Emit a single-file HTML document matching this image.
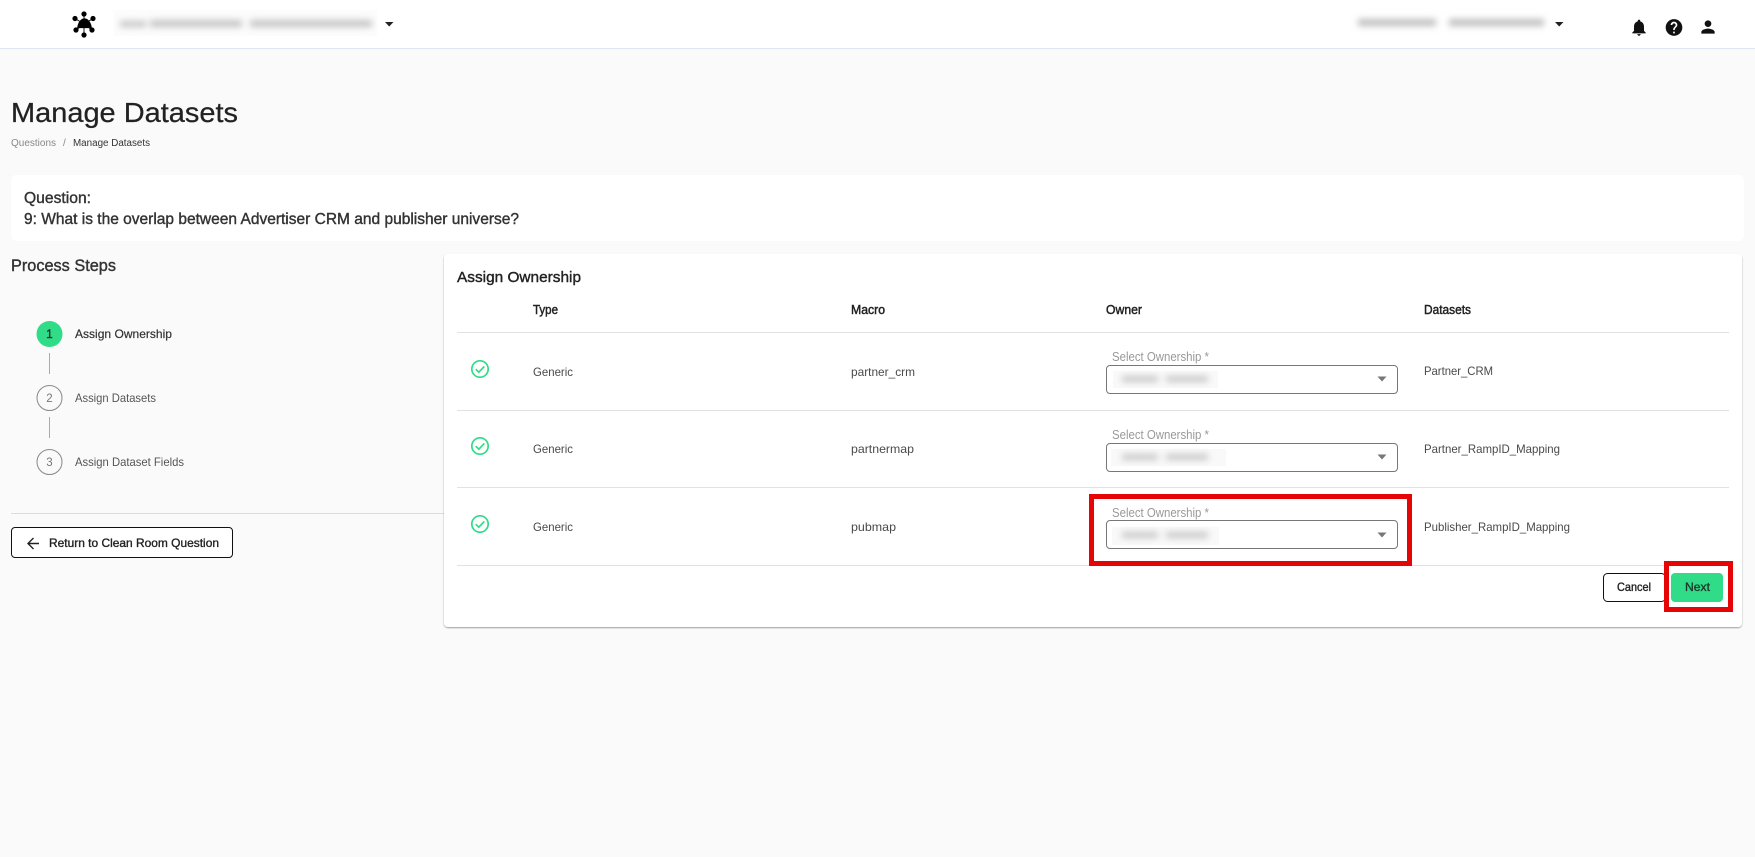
<!DOCTYPE html>
<html lang="en"><head><meta charset="utf-8"><title>Manage Datasets</title>
<style>
html,body{margin:0;padding:0;background:#fafafa;width:1755px;height:857px;overflow:hidden}
svg{display:block}
text{font-family:"Liberation Sans",sans-serif;fill:#333;font-size:12px}
.s{stroke:#333;stroke-width:.4px}
.h{fill:#222;stroke:#222;stroke-width:.45px;font-size:12.5px}
.l{fill:#999;font-size:12.5px}
</style></head><body>
<svg width="1755" height="857" viewBox="0 0 1755 857" xmlns="http://www.w3.org/2000/svg">
<defs>
<filter id="b" x="-20%" y="-150%" width="140%" height="400%"><feGaussianBlur stdDeviation="3.4"/></filter>
<filter id="sh" x="-2%" y="-2%" width="104%" height="104%"><feDropShadow dx="0" dy="1" stdDeviation="0.8" flood-color="#000" flood-opacity=".38"/></filter>
<g id="chk" fill="none" stroke="#30dc87"><circle r="8.2" stroke-width="1.7"/><path d="M-4.3 .2L-1.2 3.2L4.3-2.6" stroke-width="1.7"/></g>
<path id="car" d="M-4.5-2.5H4.5L0 2.5Z" fill="#777"/>
</defs>
<rect width="1755" height="857" fill="#fafafa"/>
<!-- header -->
<rect width="1755" height="48" fill="#fff"/>
<rect y="48" width="1755" height="1" fill="#e0e4f0"/>
<g fill="#000" stroke="#000">
<path d="M84 13.5V24M75 18.5L84 24M93 18.5L84 24M76 30L84 24M92 30L84 24M84 35V24" stroke-width=".9"/>
<g stroke-width=".8"><circle cx="84" cy="14" r="2.2"/><circle cx="75" cy="18.5" r="2.2"/><circle cx="93" cy="18.5" r="2.2"/><circle cx="76" cy="30" r="2.2"/><circle cx="92" cy="30" r="2.2"/><circle cx="84" cy="35" r="2.2"/></g>
<path d="M77.5 27.8C78 22.5 81 18.7 84.5 18.7C88 18.7 91 22.5 91.5 27.8Z" stroke-width=".6"/>
</g>
<rect x="114" y="10" width="263" height="26" fill="#fcfcfc"/>
<g fill="#c4c4c4" filter="url(#b)"><rect x="120" y="21" width="26" height="6"/><rect x="150" y="20" width="92" height="7"/><rect x="250" y="20" width="122" height="7"/></g>
<path d="M385 22H393.5L389.2 26.5Z" fill="#222"/>
<g fill="#bdbdbd" filter="url(#b)"><rect x="1358" y="19" width="78" height="7"/><rect x="1449" y="19" width="95" height="7"/></g>
<path d="M1555 22H1563.5L1559.2 26.5Z" fill="#222"/>
<g fill="#111">
<path transform="translate(1629 17.5) scale(.8333)" d="M12 22c1.1 0 2-.9 2-2h-4c0 1.1.9 2 2 2zm6-6v-5c0-3.07-1.63-5.64-4.5-6.32V4c0-.83-.67-1.5-1.5-1.5s-1.5.67-1.5 1.5v.68C7.64 5.36 6 7.92 6 11v5l-2 2v1h16v-1l-2-2z"/>
<path transform="translate(1664 17.5) scale(.8333)" d="M12 2C6.48 2 2 6.48 2 12s4.48 10 10 10 10-4.48 10-10S17.52 2 12 2zm1 17h-2v-2h2v2zm2.07-7.75l-.9.92C13.45 12.9 13 13.5 13 15h-2v-.5c0-1.1.45-2.1 1.17-2.83l1.24-1.26c.37-.36.59-.86.59-1.41 0-1.1-.9-2-2-2s-2 .9-2 2H8c0-2.21 1.79-4 4-4s4 1.79 4 4c0 .88-.36 1.68-.93 2.25z"/>
<path transform="translate(1698 17) scale(.8333)" d="M12 12c2.21 0 4-1.79 4-4s-1.79-4-4-4-4 1.79-4 4 1.79 4 4 4zm0 2c-2.67 0-8 1.34-8 4v2h16v-2c0-2.66-5.33-4-8-4z"/>
</g>
<!-- title -->
<text x="11" y="122" textLength="227" lengthAdjust="spacingAndGlyphs" style="font-size:28px;fill:#222;stroke:#222;stroke-width:.25px">Manage Datasets</text>
<text x="11" y="146" textLength="45" lengthAdjust="spacingAndGlyphs" style="font-size:10px;fill:#888">Questions</text>
<text x="63" y="146" style="font-size:10px;fill:#888">/</text>
<text x="73" y="146" textLength="77" lengthAdjust="spacingAndGlyphs" style="font-size:10px;fill:#333">Manage Datasets</text>
<!-- question -->
<rect x="11" y="175" width="1733" height="66" rx="5" fill="#fff"/>
<text x="24" y="203" class="s" textLength="67" lengthAdjust="spacingAndGlyphs" style="font-size:16px">Question:</text>
<text x="24" y="224" class="s" textLength="495" lengthAdjust="spacingAndGlyphs" style="font-size:16px">9: What is the overlap between Advertiser CRM and publisher universe?</text>
<!-- steps -->
<text x="11" y="271" class="s" textLength="105" lengthAdjust="spacingAndGlyphs" style="font-size:17px">Process Steps</text>
<circle cx="49.5" cy="334" r="13" fill="#30dc87"/>
<text x="49.5" y="338" text-anchor="middle" class="s" style="font-size:11.5px;fill:#1d3b2d;stroke:#1d3b2d">1</text>
<text x="75" y="338" class="s" textLength="97" lengthAdjust="spacingAndGlyphs" style="font-size:12px;stroke-width:.2px">Assign Ownership</text>
<rect x="49" y="353" width="1" height="21" fill="#aaa"/>
<circle cx="49.5" cy="398" r="12.5" fill="none" stroke="#888" stroke-width="1"/>
<text x="49.5" y="402" text-anchor="middle" style="font-size:11.5px;fill:#777">2</text>
<text x="75" y="402" textLength="81" lengthAdjust="spacingAndGlyphs" style="font-size:12px;fill:#555">Assign Datasets</text>
<rect x="49" y="417" width="1" height="21" fill="#aaa"/>
<circle cx="49.5" cy="462" r="12.5" fill="none" stroke="#888" stroke-width="1"/>
<text x="49.5" y="466" text-anchor="middle" style="font-size:11.5px;fill:#777">3</text>
<text x="75" y="466" textLength="109" lengthAdjust="spacingAndGlyphs" style="font-size:12px;fill:#555">Assign Dataset Fields</text>
<rect x="11" y="513" width="433" height="1" fill="#ddd"/>
<rect x="11.5" y="527.5" width="221" height="30" rx="3.5" fill="#fff" stroke="#111"/>
<path d="M39 543.5H28.5M33.5 538L28 543.5L33.5 549" fill="none" stroke="#222" stroke-width="1.4"/>
<text x="49" y="547" class="s" textLength="170" lengthAdjust="spacingAndGlyphs" style="font-size:12px;fill:#222;stroke:#222;stroke-width:.35px">Return to Clean Room Question</text>
<!-- card -->
<rect x="444" y="254" width="1298" height="373" rx="4" fill="#fff" filter="url(#sh)"/>
<text x="457" y="282" class="s" textLength="124" lengthAdjust="spacingAndGlyphs" style="font-size:15px;fill:#222;stroke:#222">Assign Ownership</text>
<text x="533" y="314" class="h" textLength="25" lengthAdjust="spacingAndGlyphs">Type</text>
<text x="851" y="314" class="h" textLength="34" lengthAdjust="spacingAndGlyphs">Macro</text>
<text x="1106" y="314" class="h" textLength="36" lengthAdjust="spacingAndGlyphs">Owner</text>
<text x="1424" y="314" class="h" textLength="47" lengthAdjust="spacingAndGlyphs">Datasets</text>
<g fill="#e2e2e2"><rect x="457" y="332" width="1272" height="1"/><rect x="457" y="410" width="1272" height="1"/><rect x="457" y="487" width="1272" height="1"/><rect x="457" y="565" width="1272" height="1"/></g>
<use href="#chk" x="480" y="369"/><use href="#chk" x="480" y="446"/><use href="#chk" x="480" y="524"/>
<g>
<text x="533" y="376" textLength="40" lengthAdjust="spacingAndGlyphs" style="fill:#4a4a4a">Generic</text>
<text x="851" y="376" textLength="64" lengthAdjust="spacingAndGlyphs" style="fill:#4a4a4a">partner_crm</text>
<text x="1424" y="375" textLength="69" lengthAdjust="spacingAndGlyphs" style="fill:#4a4a4a">Partner_CRM</text>
<text x="533" y="453" textLength="40" lengthAdjust="spacingAndGlyphs" style="fill:#4a4a4a">Generic</text>
<text x="851" y="453" textLength="63" lengthAdjust="spacingAndGlyphs" style="fill:#4a4a4a">partnermap</text>
<text x="1424" y="453" textLength="136" lengthAdjust="spacingAndGlyphs" style="fill:#4a4a4a">Partner_RampID_Mapping</text>
<text x="533" y="531" textLength="40" lengthAdjust="spacingAndGlyphs" style="fill:#4a4a4a">Generic</text>
<text x="851" y="531" textLength="45" lengthAdjust="spacingAndGlyphs" style="fill:#4a4a4a">pubmap</text>
<text x="1424" y="531" textLength="146" lengthAdjust="spacingAndGlyphs" style="fill:#4a4a4a">Publisher_RampID_Mapping</text>
</g>
<!-- selects -->
<g fill="#fff" stroke="#777"><rect x="1106.5" y="365.5" width="291" height="28" rx="3.5"/><rect x="1106.5" y="443.5" width="291" height="28" rx="3.5"/><rect x="1106.5" y="520.5" width="291" height="28" rx="3.5"/></g>
<text x="1112" y="361" class="l" textLength="97" lengthAdjust="spacingAndGlyphs">Select Ownership *</text>
<text x="1112" y="439" class="l" textLength="97" lengthAdjust="spacingAndGlyphs">Select Ownership *</text>
<text x="1112" y="517" class="l" textLength="97" lengthAdjust="spacingAndGlyphs">Select Ownership *</text>
<rect x="1113" y="371" width="105" height="17" fill="#f9f9f9"/><rect x="1111" y="449" width="115" height="17" fill="#f9f9f9"/><rect x="1112" y="527" width="107" height="18" fill="#f9f9f9"/>
<g fill="#c8c8c8" filter="url(#b)"><rect x="1122" y="376" width="36" height="6"/><rect x="1166" y="376" width="42" height="6"/></g>
<g fill="#c8c8c8" filter="url(#b)"><rect x="1122" y="454" width="36" height="6"/><rect x="1166" y="454" width="42" height="6"/></g>
<g fill="#c8c8c8" filter="url(#b)"><rect x="1122" y="532" width="36" height="6"/><rect x="1166" y="532" width="42" height="6"/></g>
<use href="#car" x="1382" y="379"/><use href="#car" x="1382" y="457"/><use href="#car" x="1382" y="535"/>
<!-- buttons -->
<rect x="1603.5" y="573.5" width="62" height="28" rx="4" fill="#fff" stroke="#111"/>
<text x="1617" y="591" class="s" textLength="34" lengthAdjust="spacingAndGlyphs" style="font-size:12px;fill:#222;stroke:#222;stroke-width:.35px">Cancel</text>
<rect x="1671" y="573" width="52" height="29" rx="4" fill="#30dc87"/>
<text x="1685" y="591" class="s" textLength="25" lengthAdjust="spacingAndGlyphs" style="font-size:12px;fill:#1d3b2d;stroke:#1d3b2d;stroke-width:.35px">Next</text>
<!-- annotations -->
<rect x="1091.5" y="496.5" width="318" height="67" fill="none" stroke="#e60505" stroke-width="5"/>
<rect x="1666.5" y="563.5" width="64" height="46" fill="none" stroke="#e60505" stroke-width="5"/>
</svg>
</body></html>
